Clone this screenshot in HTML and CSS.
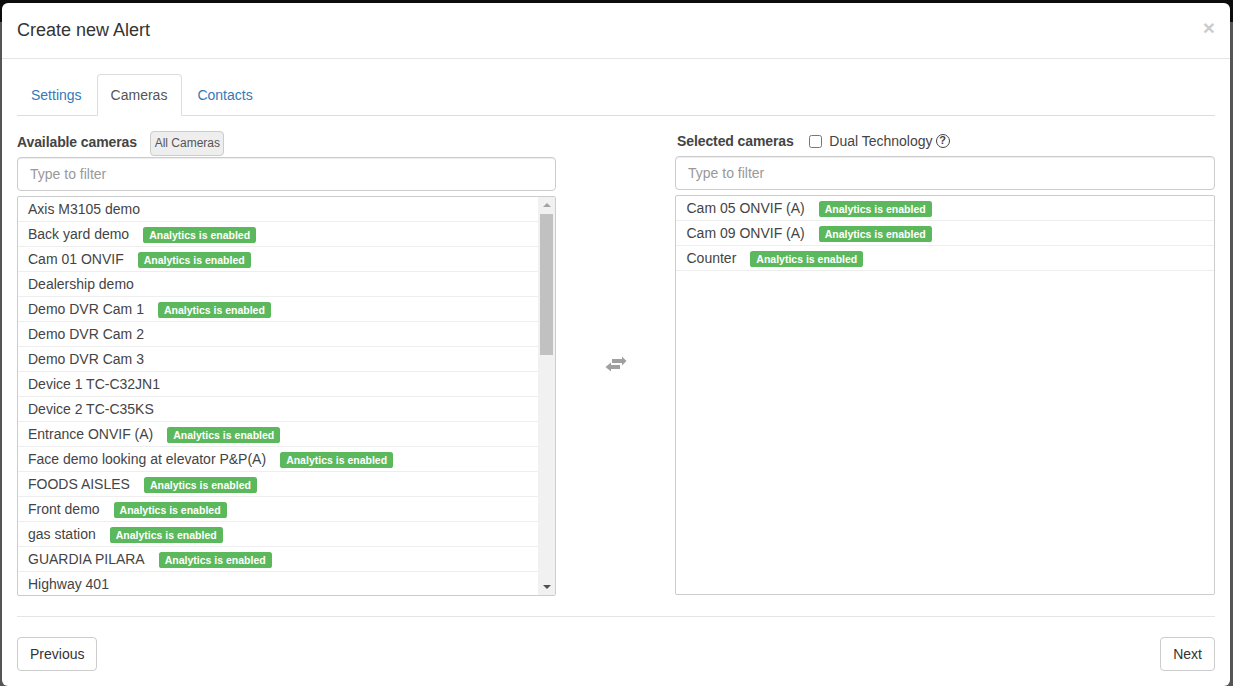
FILE: index.html
```html
<!DOCTYPE html>
<html lang="en">
<head>
<meta charset="utf-8">
<title>Create new Alert</title>
<link rel="stylesheet" href="styles.css">
</head>
<body>
<div class="modal">
  <header class="modal-header">
    <h4 class="modal-title">Create new Alert</h4>
    <span class="close">×</span>
  </header>
  <div class="modal-body">
    <ul class="tabs">
      <li class="tab"><a>Settings</a></li>
      <li class="tab active"><a>Cameras</a></li>
      <li class="tab"><a>Contacts</a></li>
    </ul>
    <div class="picker">
      <section class="pane pane-left">
        <div class="pane-head">
          <strong class="pane-label">Available cameras</strong>
          <span class="all-btn">All Cameras</span>
        </div>
        <input class="filter" type="text" placeholder="Type to filter">
        <div class="list">
          <ul class="rows">
            <li class="row">Axis M3105 demo</li>
            <li class="row">Back yard demo<span class="badge">Analytics is enabled</span></li>
            <li class="row">Cam 01 ONVIF<span class="badge">Analytics is enabled</span></li>
            <li class="row">Dealership demo</li>
            <li class="row">Demo DVR Cam 1<span class="badge">Analytics is enabled</span></li>
            <li class="row">Demo DVR Cam 2</li>
            <li class="row">Demo DVR Cam 3</li>
            <li class="row">Device 1 TC-C32JN1</li>
            <li class="row">Device 2 TC-C35KS</li>
            <li class="row">Entrance ONVIF (A)<span class="badge">Analytics is enabled</span></li>
            <li class="row">Face demo looking at elevator P&amp;P(A)<span class="badge">Analytics is enabled</span></li>
            <li class="row">FOODS AISLES<span class="badge">Analytics is enabled</span></li>
            <li class="row">Front demo<span class="badge">Analytics is enabled</span></li>
            <li class="row">gas station<span class="badge">Analytics is enabled</span></li>
            <li class="row">GUARDIA PILARA<span class="badge">Analytics is enabled</span></li>
            <li class="row">Highway 401</li>
          </ul>
          <div class="scrollbar">
            <span class="arrow arrow-up"></span>
            <span class="thumb"></span>
            <span class="arrow arrow-down"></span>
          </div>
        </div>
      </section>
      <div class="swap">
        <svg class="swap-icon" width="22" height="16" viewBox="0 0 22 16" aria-hidden="true">
          <g fill="#a0a0a0">
            <path d="M7 3h10V.5L21.5 5 17 9.5V7H7z"/>
            <path d="M15 9v4H6v2.5L.5 11 6 6.5V9z"/>
          </g>
        </svg>
      </div>
      <section class="pane pane-right">
        <div class="pane-head pane-head-right">
          <strong class="pane-label">Selected cameras</strong>
          <label class="dual"><input class="dual-check" type="checkbox">Dual Technology</label>
          <span class="help">?</span>
        </div>
        <input class="filter" type="text" placeholder="Type to filter">
        <div class="list list-right">
          <ul class="rows">
            <li class="row">Cam 05 ONVIF (A)<span class="badge">Analytics is enabled</span></li>
            <li class="row">Cam 09 ONVIF (A)<span class="badge">Analytics is enabled</span></li>
            <li class="row">Counter<span class="badge">Analytics is enabled</span></li>
          </ul>
        </div>
      </section>
    </div>
    <footer class="actions">
      <button class="btn" type="button">Previous</button>
      <button class="btn" type="button">Next</button>
    </footer>
  </div>
</div>
</body>
</html>
```
FILE: styles.css
```css
* { box-sizing: border-box; }
html, body { margin: 0; height: 100%; }
body {
  background: linear-gradient(#0c0c0c 0 22px, #555 22px);
  font-family: "Liberation Sans", Arial, sans-serif;
  font-size: 14px;
  line-height: 20px;
  color: #333;
  overflow: hidden;
  padding: 3px 3px 0 2px;
}
.modal {
  background: #fff;
  border-radius: 6px;
  height: 683px;
  display: flex;
  flex-direction: column;
}
.modal-header {
  height: 56px;
  border-bottom: 1px solid #e5e5e5;
  padding: 0 15px 2px 15px;
  display: flex;
  align-items: center;
  justify-content: space-between;
}
.modal-title { margin: 0; font-size: 18px; font-weight: 500; line-height: 20px; }
.close { font-size: 21px; font-weight: 700; color: #000; opacity: .2; line-height: 20px; margin-top: -4px; }
.modal-body { padding: 15px 15px 0; flex: 1; display: flex; flex-direction: column; }
.tabs {
  list-style: none;
  margin: 0;
  padding: 0;
  display: flex;
  height: 42px;
  border-bottom: 1px solid #ddd;
}
.tab { margin-right: 1px; height: 42px; }
.tab a {
  display: block;
  padding: 10px 13px;
  border: 1px solid transparent;
  border-radius: 4px 4px 0 0;
  height: 42px;
  color: #337ab7;
}
.tab.active a { color: #555; background: #fff; border-color: #ddd #ddd #fff; padding-right: 14px; }
.picker { display: flex; margin-top: 15px; }
.pane { display: flex; flex-direction: column; }
.pane-left { width: 539px; }
.pane-right { width: 540px; margin-top: -1px; }
.swap { width: 119px; display: flex; align-items: center; justify-content: center; }
.swap-icon { display: block; }
.pane-head { height: 26px; display: flex; align-items: flex-start; }
.pane-label { color: #444; font-weight: 700; margin-top: 1px; letter-spacing: -0.1px; }
.all-btn {
  margin-left: 12.7px;
  background: #eee;
  border: 1px solid #ccc;
  border-radius: 4px;
  font-size: 12px;
  line-height: 18px;
  height: 25px;
  padding: 2px 4px;
  width: 74px;
  white-space: nowrap;
  color: #555;
}
.pane-head-right { padding-left: 2px; }
.dual { display: flex; align-items: center; margin: 1px 0 0 15.6px; color: #444; }
.dual-check { margin: 0 7px 0 0; width: 13px; height: 13px; }
.help {
  margin: 4px 0 0 3px;
  width: 14px;
  height: 14px;
  border: 1.5px solid #444;
  border-radius: 50%;
  font-size: 11px;
  font-weight: 700;
  line-height: 11px;
  text-align: center;
  color: #444;
}
.filter {
  display: block;
  width: 100%;
  height: 34px;
  margin-top: 0;
  padding: 6px 12px;
  border: 1px solid #ccc;
  border-radius: 4px;
  font: 14px/20px "Liberation Sans", Arial, sans-serif;
  color: #555;
  box-shadow: inset 0 1px 1px rgba(0,0,0,.075);
}
.filter::placeholder { color: #999; opacity: 1; }
.list {
  margin-top: 5px;
  height: 400px;
  border: 1px solid #ccc;
  border-radius: 2px;
  display: flex;
  overflow: hidden;
}
.rows { list-style: none; margin: 0; padding: 0; flex: 1; min-width: 0; overflow: hidden; }
.row {
  height: 25px;
  padding: 2px 10px;
  border-bottom: 1px solid #eee;
  display: flex;
  align-items: center;
  color: #444;
  white-space: nowrap;
}
.list-right .row { padding-left: 10.5px; }
.badge {
  margin-left: 14px;
  background: #5cb85c;
  color: #fff;
  font-size: 10.5px;
  font-weight: 700;
  line-height: 16px;
  height: 16px;
  padding: 0 6px;
  border-radius: 2.6px;
  position: relative;
  top: 1px;
}
.scrollbar { width: 17px; background: #f1f1f1; display: flex; flex-direction: column; align-items: center; }
.thumb { width: 13px; height: 141px; background: #c1c1c1; margin-top: 0; }
.arrow { width: 0; height: 0; border-left: 4px solid transparent; border-right: 4px solid transparent; }
.arrow-up { border-bottom: 4px solid #a3a3a3; margin: 6px 0 7px; }
.arrow-down { border-top: 4px solid #505050; margin-top: auto; margin-bottom: 6px; }
.actions {
  margin-top: 20px;
  border-top: 1px solid #e5e5e5;
  padding-top: 20px;
  display: flex;
  justify-content: space-between;
}
.btn {
  height: 34px;
  padding: 6px 12px;
  border: 1px solid #ccc;
  border-radius: 4px;
  background: #fff;
  color: #333;
  font: 14px/20px "Liberation Sans", Arial, sans-serif;
}
```
